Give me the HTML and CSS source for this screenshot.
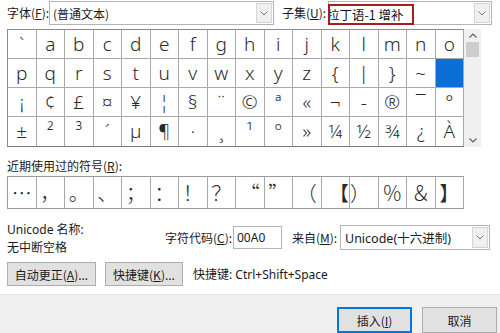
FILE: index.html
```html
<!DOCTYPE html>
<html lang="zh-CN">
<head>
<meta charset="utf-8">
<title>符号</title>
<link rel="stylesheet" href="styles.css">
</head>
<body>
<div class="dlg">
  <div class="toprow">
    <span class="lbl lbl-font">字体(<u>F</u>):</span>
    <div class="combo combo-font">
      <span class="val">(普通文本)</span>
      <span class="drop"><svg width="8" height="5" viewBox="0 0 8 5"><path d="M0.5 0.5 L4 4 L7.5 0.5" fill="none" stroke="#777" stroke-width="1"/></svg></span>
    </div>
    <span class="lbl lbl-sub">子集(<u>U</u>):</span>
    <div class="combo combo-sub">
      <span class="hl"><span class="hltext">拉丁语-1 增补</span></span>
      <span class="drop"><svg width="8" height="5" viewBox="0 0 8 5"><path d="M0.5 0.5 L4 4 L7.5 0.5" fill="none" stroke="#777" stroke-width="1"/></svg></span>
    </div>
  </div>

  <div class="charsarea">
    <div class="grid">
      <span class="c">`</span><span class="c">a</span><span class="c">b</span><span class="c">c</span><span class="c">d</span><span class="c">e</span><span class="c">f</span><span class="c">g</span><span class="c">h</span><span class="c">i</span><span class="c">j</span><span class="c">k</span><span class="c">l</span><span class="c">m</span><span class="c">n</span><span class="c">o</span>
      <span class="c">p</span><span class="c">q</span><span class="c">r</span><span class="c">s</span><span class="c">t</span><span class="c">u</span><span class="c">v</span><span class="c">w</span><span class="c">x</span><span class="c">y</span><span class="c">z</span><span class="c">{</span><span class="c">|</span><span class="c">}</span><span class="c">~</span><span class="c sel">&nbsp;</span>
      <span class="c">¡</span><span class="c">¢</span><span class="c">£</span><span class="c">¤</span><span class="c">¥</span><span class="c">¦</span><span class="c">§</span><span class="c">¨</span><span class="c">©</span><span class="c">ª</span><span class="c">«</span><span class="c">¬</span><span class="c">-</span><span class="c">®</span><span class="c">¯</span><span class="c">°</span>
      <span class="c">±</span><span class="c">²</span><span class="c">³</span><span class="c">´</span><span class="c">µ</span><span class="c">¶</span><span class="c">·</span><span class="c">¸</span><span class="c">¹</span><span class="c">º</span><span class="c">»</span><span class="c">¼</span><span class="c">½</span><span class="c">¾</span><span class="c">¿</span><span class="c">À</span>
    </div>
    <div class="scrollbar">
      <span class="sarrow"><svg width="8" height="5" viewBox="0 0 8 5"><path d="M0.5 4.5 L4 1 L7.5 4.5" fill="none" stroke="#606060" stroke-width="1.2"/></svg></span>
      <span class="thumb"></span>
      <span class="track"></span>
      <span class="sarrow"><svg width="8" height="5" viewBox="0 0 8 5"><path d="M0.5 0.5 L4 4 L7.5 0.5" fill="none" stroke="#606060" stroke-width="1.2"/></svg></span>
    </div>
  </div>

  <div class="recent-label">近期使用过的符号(<u>R</u>):</div>
  <div class="recent">
    <span class="r">…</span><span class="r">，</span><span class="r">。</span><span class="r">、</span><span class="r">；</span><span class="r">：</span><span class="r">！</span><span class="r">？</span><span class="r">“</span><span class="r">”</span><span class="r">（</span><span class="r rr">【</span><span class="r rl">）</span><span class="r">％</span><span class="r">＆</span><span class="r">】</span>
  </div>

  <div class="info">
    <div class="infoleft">
      <div class="line">Unicode 名称:</div>
      <div class="line">无中断空格</div>
    </div>
    <div class="coderow">
      <span class="lbl-code">字符代码(<u>C</u>):</span>
      <span class="field code-field">00A0</span>
      <span class="lbl-from">来自(<u>M</u>):</span>
      <div class="combo combo-from">
        <span class="val">Unicode(十六进制)</span>
        <span class="drop"><svg width="8" height="5" viewBox="0 0 8 5"><path d="M0.5 0.5 L4 4 L7.5 0.5" fill="none" stroke="#777" stroke-width="1"/></svg></span>
      </div>
    </div>
  </div>

  <div class="btnrow">
    <button class="btn btn-auto">自动更正(<u>A</u>)...</button>
    <button class="btn btn-key">快捷键(<u>K</u>)...</button>
    <span class="shortcut">快捷键: Ctrl+Shift+Space</span>
  </div>

  <div class="footer">
    <button class="btn fbtn primary">插入(<u>I</u>)</button>
    <button class="btn fbtn">取消</button>
  </div>
</div>
</body>
</html>
```

FILE: styles.css
```css
* { box-sizing: border-box; }

body {
  margin: 0;
  width: 500px;
  height: 333px;
  overflow: hidden;
  background: #ffffff;
  font-family: "Noto Sans", "Noto Sans CJK SC", sans-serif;
  font-size: 12px;
  color: #1a1a1a;
}

u { text-decoration: underline; text-underline-offset: 1px; }

.dlg {
  display: flex;
  flex-direction: column;
  height: 333px;
}

/* top row */
.toprow {
  display: flex;
  align-items: flex-start;
  height: 26px;
  padding: 1px 0 0 7px;
}
.lbl {
  line-height: 24px;
  font-family: "Noto Sans CJK SC", sans-serif;
  white-space: nowrap;
}
.lbl-font { width: 42px; }
.lbl-sub { width: 46px; margin-left: 8px; }

.combo {
  height: 24px;
  border: 1px solid #b4b4b4;
  background: #fff;
  display: flex;
  align-items: center;
  font-family: "Noto Sans CJK SC", sans-serif;
}
.combo .val { padding-left: 3px; white-space: nowrap; }
.combo-font { width: 225px; }
.combo-sub { width: 164px; align-items: flex-start; }

.drop {
  margin-left: auto;
  margin-right: 1px;
  width: 16px;
  height: 20px;
  background: #f0f0f0;
  border: 1px solid #d4d4d4;
  display: flex;
  align-items: center;
  justify-content: center;
}
.combo-sub .drop { margin-top: 1px; }

.hl {
  width: 86px;
  height: 21px;
  margin: 2px 0 0 -1px;
  border: 2px solid #ad1a20;
  overflow: hidden;
  display: flex;
  align-items: center;
  white-space: nowrap;
}
.hltext { margin-left: -3px; font-size: 12.5px; color: #111; }

/* character grid */
.charsarea {
  display: flex;
  margin-top: 3px;
  padding-left: 7px;
}
.grid {
  display: grid;
  grid-template-columns: repeat(16, 28.5px);
  grid-auto-rows: 29px;
  border-top: 1px solid #8c8c8c;
  border-left: 1px solid #8c8c8c;
  border-bottom: 1px solid #7a7a7a;
}
.c {
  border-right: 1px solid #a9a9a9;
  border-bottom: 1px solid #a9a9a9;
  display: flex;
  align-items: center;
  justify-content: center;
  font-family: "Noto Sans", sans-serif;
  font-weight: 300;
  font-size: 19px;
  color: #2a2a2a;
  line-height: 1;
}
.grid .c:nth-last-child(-n+16) { border-bottom: none; }
.c.sel { background: #0b6fd6; }

.scrollbar {
  width: 17px;
  height: 118px;
  background: #f0f0f0;
  display: flex;
  flex-direction: column;
  align-items: center;
}
.sarrow {
  height: 13px;
  width: 17px;
  display: flex;
  align-items: center;
  justify-content: center;
}
.thumb {
  width: 13px;
  height: 15px;
  background: #cdcdcd;
}
.track { flex: 1; }

/* recent */
.recent-label {
  margin-top: 11px;
  padding-left: 7px;
  line-height: 16px;
  font-family: "Noto Sans CJK SC", sans-serif;
}
.recent {
  margin: 2px 0 0 7px;
  display: grid;
  grid-template-columns: repeat(16, 28.5px);
  grid-auto-rows: 31px;
  width: 457px;
  border: 1px solid #9a9a9a;
  border-right: none;
}
.r {
  border-right: 1px solid #a9a9a9;
  display: flex;
  align-items: center;
  justify-content: center;
  font-family: "Noto Sans CJK SC", sans-serif;
  font-weight: 300;
  font-size: 20px;
  color: #2a2a2a;
  line-height: 1;
}
.r.rr { justify-content: flex-end; }
.r.rl { justify-content: flex-start; }

/* info */
.info {
  display: flex;
  margin-top: 12px;
  padding-left: 7px;
}
.infoleft { width: 158px; font-family: "Noto Sans", "Noto Sans CJK SC", sans-serif; }
.infoleft .line { line-height: 18px; white-space: nowrap; }

.coderow {
  display: flex;
  align-items: center;
  margin-top: 4px;
  height: 24px;
  font-family: "Noto Sans CJK SC", sans-serif;
}
.lbl-code { width: 68px; white-space: nowrap; }
.field {
  width: 49px;
  height: 23px;
  border: 1px solid #b4b4b4;
  padding-left: 3px;
  display: flex;
  align-items: center;
  font-family: "Noto Sans", sans-serif;
}
.lbl-from { width: 48px; margin-left: 10px; white-space: nowrap; }
.combo-from { width: 150px; height: 25px; margin-top: 1px; }
.combo-from .val { font-family: "Noto Sans", "Noto Sans CJK SC", sans-serif; font-size: 12.5px; padding-left: 4px; }
.combo-from .drop { height: 21px; }

/* buttons */
.btnrow {
  display: flex;
  align-items: center;
  margin-top: 5px;
  padding-left: 7px;
  height: 24px;
}
.btn {
  height: 24px;
  background: #e1e1e1;
  border: 1px solid #adadad;
  font-family: "Noto Sans CJK SC", sans-serif;
  font-size: 12px;
  color: #1a1a1a;
  padding: 0;
  display: flex;
  align-items: center;
  justify-content: center;
}
.btn-auto { width: 89px; }
.btn-key { width: 78px; margin-left: 9px; }
.shortcut {
  margin-left: 10px;
  font-family: "Noto Sans", "Noto Sans CJK SC", sans-serif;
  white-space: nowrap;
}

.footer {
  flex: 1;
  margin-top: 8px;
  background: #f0f0f0;
  border-top: 1px solid #e4e4e4;
  display: flex;
  justify-content: flex-end;
  align-items: flex-start;
  padding: 12px 3px 0 0;
  gap: 10px;
}
.fbtn { width: 75px; height: 26px; }
.fbtn.primary { border: 1px solid #0078d7; box-shadow: inset 0 0 0 1px #0078d7; }
```
